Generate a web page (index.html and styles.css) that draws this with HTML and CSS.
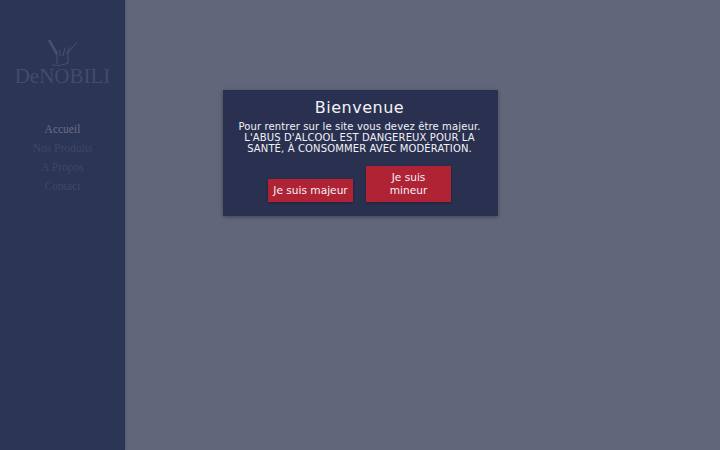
FILE: index.html
```html
<!DOCTYPE html>
<html lang="fr">
  <head>
    <meta charset="UTF-8" />
    <title>DeNobili</title>
    <link rel="stylesheet" href="styles.css">
  </head>
  <body>
    <!-- Sidebar -->
    <aside class="sidebar">
      <div class="logo">
        <svg class="logo-icon" viewBox="0 0 34 28" width="34" height="28" fill="none">
          <path class="logo-thumb" d="M3 1 L11 15" />
          <path d="M11 14 L11 25 M6 26 C12 27 18 26 22 24 M31 3 L22 14 L22 24" />
          <path d="M14 17 L14 11 M17 17 L19 9 M20 15 L24 8" />
        </svg>
        <div class="logo-text">DeNOBILI</div>
      </div>
      <nav class="menu">
        <a class="menu-item active">Accueil</a>
        <a class="menu-item">Nos Produits</a>
        <a class="menu-item">A Propos</a>
        <a class="menu-item">Contact</a>
      </nav>
    </aside>

    <main class="content"></main>

    <!-- Age popup -->
    <div class="popup">
      <h2>Bienvenue</h2>
      <p>Pour rentrer sur le site vous devez être majeur.<br />L'ABUS D'ALCOOL EST DANGEREUX POUR LA SANTÉ, À CONSOMMER AVEC MODÉRATION.</p>
      <div class="popup-buttons">
        <button class="one-line">Je suis majeur</button>
        <button>Je suis mineur</button>
      </div>
    </div>
  </body>
</html>
```

FILE: styles.css
```css
body {
  margin: 0;
  height: 450px;
  overflow: hidden;
  display: flex;
  font-family: "DejaVu Sans", sans-serif;
  background-color: #62667a;
}

.sidebar {
  width: 125px;
  flex-shrink: 0;
  background: #2b3556;
  box-shadow: 1px 0 2px rgba(0, 0, 0, 0.15);
}

.logo {
  display: flex;
  flex-direction: column;
  align-items: center;
  padding-top: 39px;
}

.logo-icon {
  stroke: #4a5068;
  stroke-width: 1;
}

.logo-thumb {
  stroke-width: 2.6;
}

.logo-text {
  margin-top: -2px;
  font-family: "Liberation Serif", serif;
  font-size: 21px;
  line-height: 22px;
  color: #454b66;
}

.menu {
  display: flex;
  flex-direction: column;
  align-items: center;
  gap: 4px;
  margin-top: 35px;
}

.menu-item {
  font-family: "Liberation Serif", serif;
  font-size: 11.5px;
  line-height: 15px;
  color: #3f4762;
}

.menu-item.active {
  color: #6a7085;
}

.content {
  flex-grow: 1;
}

.popup {
  position: absolute;
  top: 90px;
  left: 222.5px;
  width: 275px;
  height: 126px;
  box-sizing: border-box;
  padding: 8px 11px 0 10px;
  text-align: center;
  color: #f2f2f5;
  background: #2a3150;
  box-shadow: 0 1px 4px rgba(0, 0, 0, 0.35);
}

.popup h2 {
  margin: 0;
  font-size: 16px;
  font-weight: normal;
  line-height: 20px;
  letter-spacing: 0.5px;
}

.popup p {
  margin: 3px 0 0;
  padding: 0 4px;
  font-size: 10px;
  line-height: 11px;
  letter-spacing: 0.13px;
}

.popup-buttons {
  display: flex;
  justify-content: center;
  align-items: flex-end;
  gap: 13px;
  margin-top: 12px;
}

.popup-buttons button {
  width: 85px;
  padding: 5px 8px;
  border: none;
  font-family: inherit;
  font-size: 10.6px;
  line-height: 13px;
  color: #f2f2f5;
  background: #b02335;
  box-shadow: 0 1px 3px rgba(0, 0, 0, 0.3);
}

.popup-buttons .one-line {
  padding: 5px 0;
  white-space: nowrap;
}
```
